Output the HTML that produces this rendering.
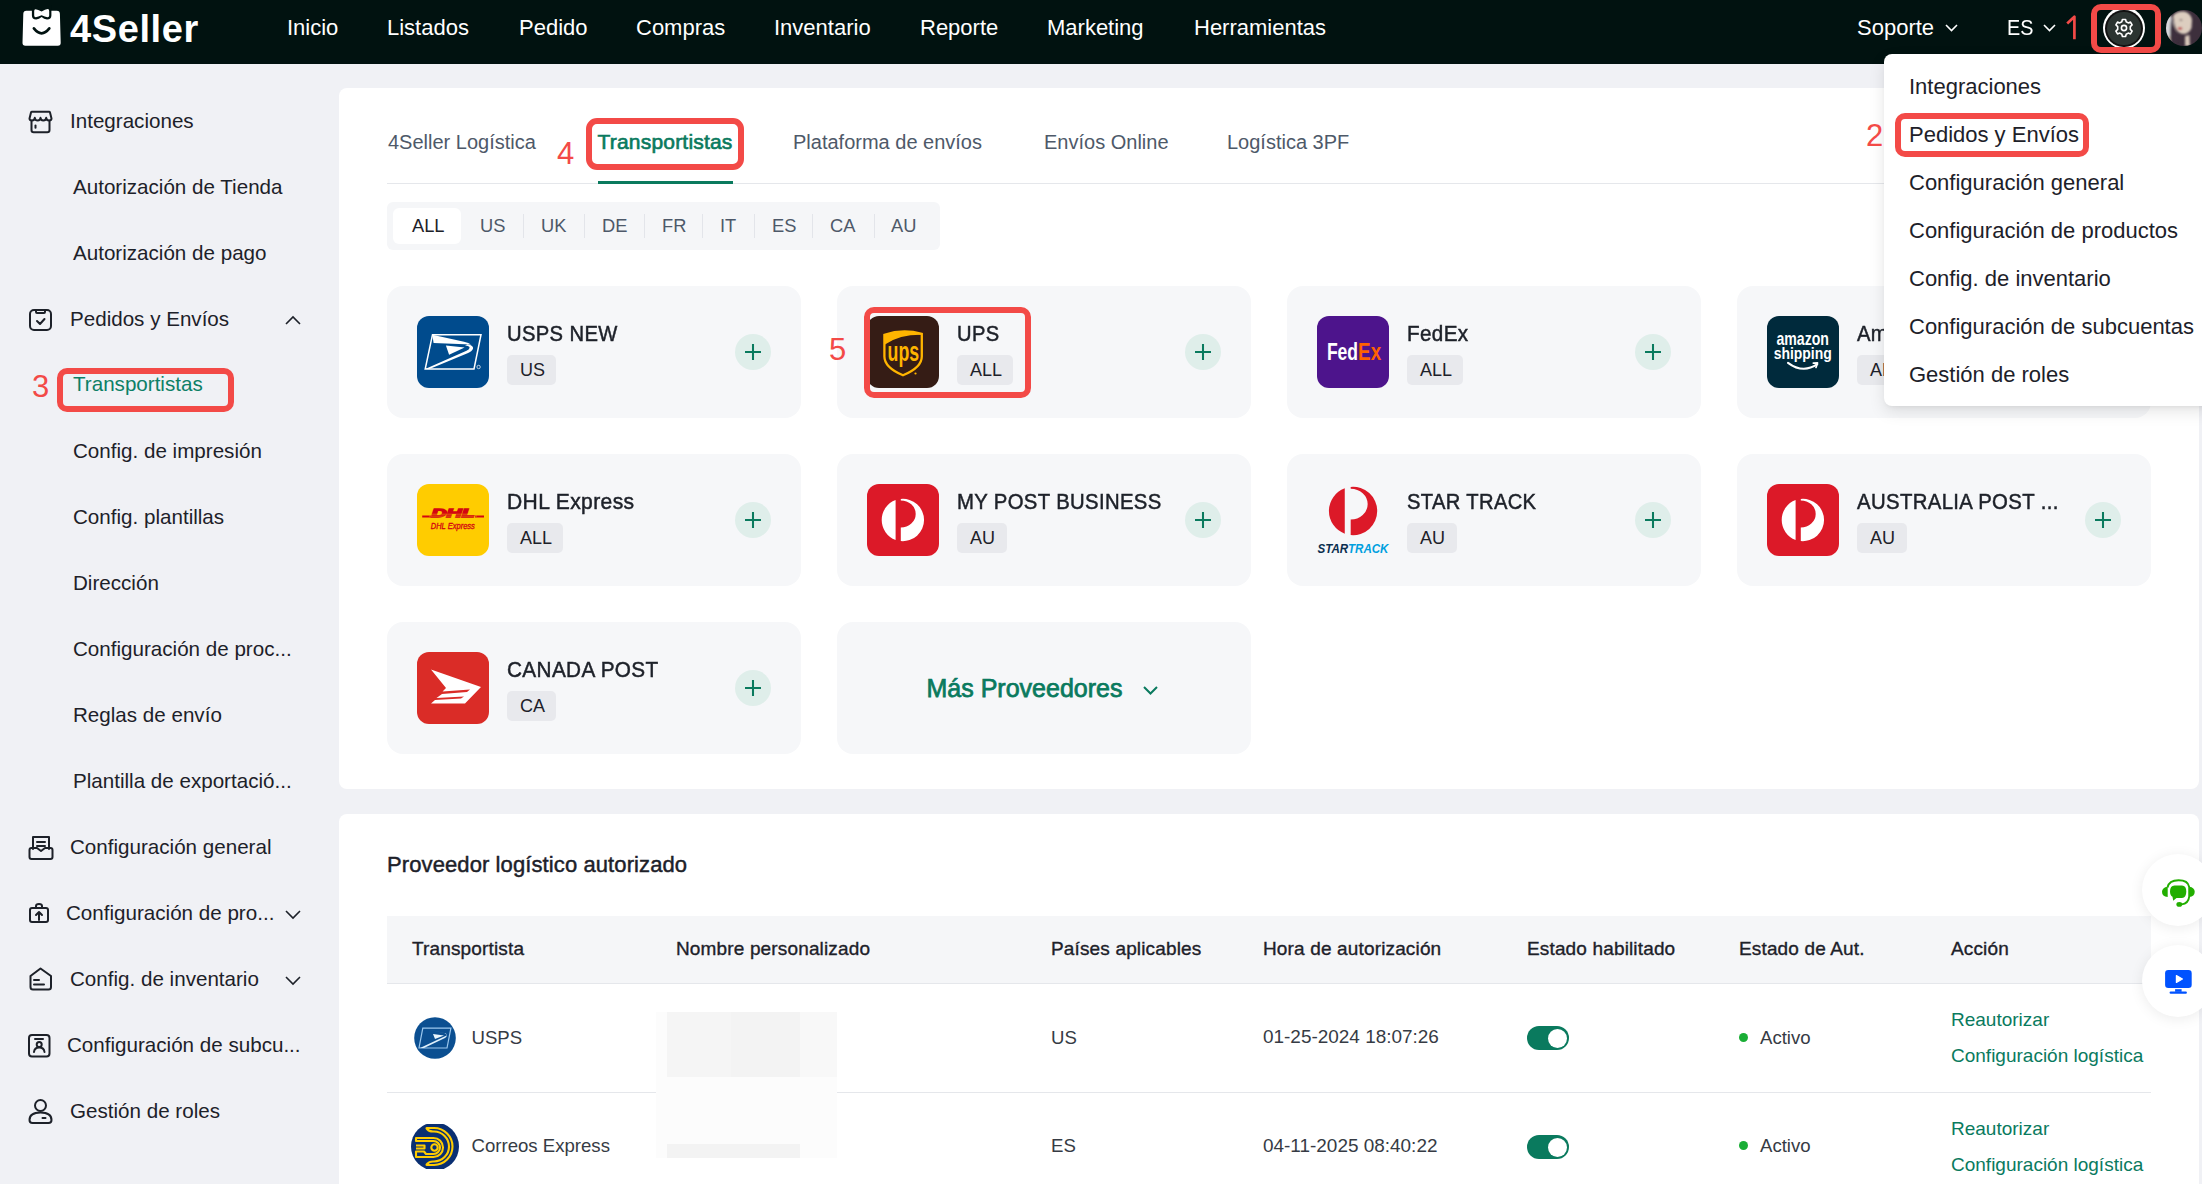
<!DOCTYPE html><html><head><meta charset="utf-8"><style>
html,body{margin:0;padding:0}
body{width:2202px;height:1184px;overflow:hidden;position:relative;background:#f0f1f5;font-family:"Liberation Sans",sans-serif}
.a{position:absolute;box-sizing:border-box}
.t{position:absolute;white-space:nowrap}
svg.a{overflow:visible}
</style></head><body>
<div class="a" style="left:0px;top:0px;width:2202px;height:64px;background:#011210"></div>
<svg class="a" style="left:18px;top:5px;" width="50" height="45" viewBox="0 0 50 45"><path d="M8.3 5.7 L38.8 5.7 Q41.8 5.7 41.9 8.7 L42.7 37.8 Q42.8 40.8 39.8 40.8 L7.4 40.8 Q4.4 40.8 4.5 37.8 L5.3 8.7 Q5.4 5.7 8.3 5.7 Z" fill="#fff"/>
<path d="M13.9 0 L33.4 0 L33.4 10.5 Q33.4 14.4 29 14.4 Q26 14.4 23.6 12 Q21 14.4 18.2 14.4 Q13.9 14.4 13.9 10.5 Z" fill="#011210"/>
<path d="M17.5 4.2 Q20 4.4 23.6 6.6 Q27.3 4.4 29.8 4.1 Q31.2 4.2 31.2 6 L31.2 10.5 Q31.2 12.3 29.5 12.2 Q27 11.8 23.6 10.3 Q20 11.8 17.8 12.2 Q16.2 12.3 16.2 10.5 L16.2 6 Q16.2 4.2 17.5 4.2 Z" fill="#fff"/>
<path d="M15.9 23.4 Q23.6 33.2 31.3 23.4" stroke="#011210" stroke-width="2.7" fill="none" stroke-linecap="round"/></svg>
<div class="t" style="left:70px;top:9.7px;font-size:38px;line-height:38px;color:#fff;font-weight:bold;letter-spacing:0.6px;">4Seller</div>
<div class="t" style="left:287px;top:17.3px;font-size:22px;line-height:22px;color:#fff;">Inicio</div>
<div class="t" style="left:387px;top:17.3px;font-size:22px;line-height:22px;color:#fff;">Listados</div>
<div class="t" style="left:519px;top:17.3px;font-size:22px;line-height:22px;color:#fff;">Pedido</div>
<div class="t" style="left:636px;top:17.3px;font-size:22px;line-height:22px;color:#fff;">Compras</div>
<div class="t" style="left:774px;top:17.3px;font-size:22px;line-height:22px;color:#fff;">Inventario</div>
<div class="t" style="left:920px;top:17.3px;font-size:22px;line-height:22px;color:#fff;">Reporte</div>
<div class="t" style="left:1047px;top:17.3px;font-size:22px;line-height:22px;color:#fff;">Marketing</div>
<div class="t" style="left:1194px;top:17.3px;font-size:22px;line-height:22px;color:#fff;">Herramientas</div>
<div class="t" style="left:1857px;top:17.3px;font-size:22px;line-height:22px;color:#fff;">Soporte</div>
<svg class="a" style="left:1945px;top:24px;" width="13" height="8" viewBox="0 0 13 8"><path d="M1 1 L6.5 6.5 L12 1" stroke="#fff" stroke-width="1.6" fill="none"/></svg>
<div class="t" style="left:2007.3px;top:17.3px;font-size:22px;line-height:22px;color:#fff;transform:scaleX(0.9);transform-origin:0 0;">ES</div>
<svg class="a" style="left:2043px;top:24px;" width="13" height="8" viewBox="0 0 13 8"><path d="M1 1 L6.5 6.5 L12 1" stroke="#fff" stroke-width="1.6" fill="none"/></svg>
<svg class="a" style="left:2066px;top:15px;" width="14" height="25" viewBox="0 0 14 25"><path d="M1.2 8.5 L7.8 2.2 L8.4 1.6 L8.4 24.3" stroke="#f34a47" stroke-width="2.7" fill="none" stroke-linejoin="round"/></svg>
<div class="a" style="left:2103px;top:7.3px;width:42px;height:42px;border-radius:50%;background:#fff"></div>
<div class="a" style="left:2105.2px;top:9.5px;width:37.6px;height:37.6px;border-radius:50%;background:#111"></div>
<div class="a" style="left:2107.3px;top:11.6px;width:33.6px;height:33.6px;border-radius:50%;background:#2b3431"></div>
<svg class="a" style="left:2114px;top:18px;" width="20" height="20" viewBox="0 0 20 20"><g transform="translate(10,10)" fill="none" stroke="#fff" stroke-width="1.6" stroke-linejoin="round">
<path d="M-1.6 -8.5 L1.6 -8.5 L2.2 -6.2 L4.2 -5.1 L6.5 -5.9 L8.1 -3.1 L6.3 -1.4 L6.3 1.4 L8.1 3.1 L6.5 5.9 L4.2 5.1 L2.2 6.2 L1.6 8.5 L-1.6 8.5 L-2.2 6.2 L-4.2 5.1 L-6.5 5.9 L-8.1 3.1 L-6.3 1.4 L-6.3 -1.4 L-8.1 -3.1 L-6.5 -5.9 L-4.2 -5.1 L-2.2 -6.2 Z"/>
<circle r="2.6"/></g></svg>
<div class="a" style="left:2091px;top:4px;width:70px;height:48.5px;border:6px solid #f34a47;border-radius:10px"></div>
<svg class="a" style="left:2166px;top:10px;" width="36" height="36" viewBox="0 0 36 36"><defs><clipPath id="av"><circle cx="18" cy="18" r="18"/></clipPath><filter id="avb" x="-20%" y="-20%" width="140%" height="140%"><feGaussianBlur stdDeviation="0.9"/></filter></defs>
<g clip-path="url(#av)"><rect width="36" height="36" fill="#3d2f3c"/><g filter="url(#avb)">
<ellipse cx="3" cy="17" rx="5" ry="12" fill="#d8d8dc"/>
<ellipse cx="4" cy="31" rx="5" ry="5" fill="#cfbdb0"/>
<path d="M7 6 Q10 1 18 1.5 Q25 3 26 10 L25.5 18 Q23 24 17 24 Q11 23 9 17 Z" fill="#dccdbf"/>
<path d="M6 5 Q7 18 12 30 L8 36 L5 36 Q3 20 6 5 Z" fill="#3d2f3c"/>
<ellipse cx="14" cy="18.5" rx="2.4" ry="1.3" fill="#b9353a"/>
<ellipse cx="15" cy="10" rx="1.5" ry="0.8" fill="#6a5a5a"/>
<path d="M19 26 L23.5 25 L24 36 L19 36 Z" fill="#d9c9bb"/></g></g></svg>
<svg class="a" style="left:28px;top:110px;" width="25" height="24" viewBox="0 0 25 24"><g fill="none" stroke="#1d2129" stroke-width="2" stroke-linecap="round" stroke-linejoin="round"><path d="M1.5 8.5 Q1.5 10.5 4 10.5 Q6.5 10.5 6.8 7.8 Q7.2 10.5 9.7 10.5 Q12.3 10.5 12.5 7.8 Q12.8 10.5 15.3 10.5 Q17.9 10.5 18.2 7.8 Q18.5 10.5 21 10.5 Q23.5 10.5 23.5 8.5 L22 2.5 Q21.8 1.8 21 1.8 L4 1.8 Q3.2 1.8 3 2.5 Z"/><path d="M3.5 10.8 L3.5 20 Q3.5 22.2 5.7 22.2 L19.3 22.2 Q21.5 22.2 21.5 20 L21.5 10.8"/><path d="M7.5 15.5 L7.5 17.8"/></g></svg>
<div class="t" style="left:70px;top:111.0px;font-size:20.6px;line-height:20.6px;color:#1d2129;">Integraciones</div>
<div class="t" style="left:73px;top:176.5px;font-size:20.6px;line-height:20.6px;color:#1d2129;">Autorización de Tienda</div>
<div class="t" style="left:73px;top:242.5px;font-size:20.6px;line-height:20.6px;color:#1d2129;">Autorización de pago</div>
<svg class="a" style="left:29px;top:308px;" width="24" height="23" viewBox="0 0 24 23"><g fill="none" stroke="#1d2129" stroke-width="2" stroke-linecap="round" stroke-linejoin="round"><rect x="1" y="2" width="21" height="20" rx="4"/><path d="M7 2 L7 4 Q7 5 8 5 L15 5 Q16 5 16 4 L16 2"/><path d="M8 13 L11 16 L15.5 11"/></g></svg>
<div class="t" style="left:70px;top:308.5px;font-size:20.6px;line-height:20.6px;color:#1d2129;">Pedidos y Envíos</div>
<svg class="a" style="left:285px;top:315px;" width="16" height="10" viewBox="0 0 16 10"><path d="M1 9 L8 2 L15 9" stroke="#1d2129" stroke-width="1.6" fill="none"/></svg>
<div class="t" style="left:73px;top:373.8px;font-size:20.6px;line-height:20.6px;color:#0d7f66;">Transportistas</div>
<div class="t" style="left:73px;top:440.5px;font-size:20.6px;line-height:20.6px;color:#1d2129;">Config. de impresión</div>
<div class="t" style="left:73px;top:506.5px;font-size:20.6px;line-height:20.6px;color:#1d2129;">Config. plantillas</div>
<div class="t" style="left:73px;top:572.5px;font-size:20.6px;line-height:20.6px;color:#1d2129;">Dirección</div>
<div class="t" style="left:73px;top:638.5px;font-size:20.6px;line-height:20.6px;color:#1d2129;">Configuración de proc...</div>
<div class="t" style="left:73px;top:704.5px;font-size:20.6px;line-height:20.6px;color:#1d2129;">Reglas de envío</div>
<div class="t" style="left:73px;top:770.5px;font-size:20.6px;line-height:20.6px;color:#1d2129;">Plantilla de exportació...</div>
<svg class="a" style="left:28px;top:835px;" width="26" height="25" viewBox="0 0 26 25"><g fill="none" stroke="#1d2129" stroke-width="2" stroke-linecap="round" stroke-linejoin="round"><path d="M5 14 L5 2 L21 2 L21 14"/><path d="M9 7 L17 7 M9 11 L17 11"/><path d="M1.5 15 Q1.5 13 3.5 13 L9 13 L13 16 L17 13 L22.5 13 Q24.5 13 24.5 15 L24.5 22 Q24.5 24 22.5 24 L3.5 24 Q1.5 24 1.5 22 Z"/></g></svg>
<div class="t" style="left:70px;top:836.5px;font-size:20.6px;line-height:20.6px;color:#1d2129;">Configuración general</div>
<svg class="a" style="left:29px;top:903px;" width="20" height="20" viewBox="0 0 20 20"><g fill="none" stroke="#1d2129" stroke-width="2" stroke-linecap="round" stroke-linejoin="round"><rect x="1" y="5" width="18" height="14" rx="2"/><path d="M7 5 L7 3 Q7 1 10 1 Q13 1 13 3 L13 5"/><path d="M10 17 L10 9 M7 12 L10 9 L13 12"/></g></svg>
<div class="t" style="left:66px;top:902.5px;font-size:20.6px;line-height:20.6px;color:#1d2129;">Configuración de pro...</div>
<svg class="a" style="left:285px;top:910px;" width="16" height="9" viewBox="0 0 16 9"><path d="M1 1 L8 8 L15 1" stroke="#1d2129" stroke-width="1.6" fill="none"/></svg>
<svg class="a" style="left:29px;top:967px;" width="24" height="24" viewBox="0 0 24 24"><g fill="none" stroke="#1d2129" stroke-width="2" stroke-linecap="round" stroke-linejoin="round"><path d="M1.5 9 L11.5 1.5 L22 9 L22 20 Q22 22.5 19.5 22.5 L4 22.5 Q1.5 22.5 1.5 20 Z"/><path d="M5 13 L10 13 M5 17.5 L15 17.5"/></g></svg>
<div class="t" style="left:70px;top:968.5px;font-size:20.6px;line-height:20.6px;color:#1d2129;">Config. de inventario</div>
<svg class="a" style="left:285px;top:976px;" width="16" height="9" viewBox="0 0 16 9"><path d="M1 1 L8 8 L15 1" stroke="#1d2129" stroke-width="1.6" fill="none"/></svg>
<svg class="a" style="left:28px;top:1034px;" width="22" height="23" viewBox="0 0 22 23"><g fill="none" stroke="#1d2129" stroke-width="2" stroke-linecap="round" stroke-linejoin="round"><rect x="1" y="1" width="20.5" height="21.5" rx="3"/><path d="M7 5 L15 5"/><circle cx="11.2" cy="10.5" r="2.5"/><path d="M6 18 Q6.5 13.5 11.2 13.5 Q16 13.5 16.5 18"/></g></svg>
<div class="t" style="left:67px;top:1034.5px;font-size:20.6px;line-height:20.6px;color:#1d2129;">Configuración de subcu...</div>
<svg class="a" style="left:28px;top:1099px;" width="26" height="26" viewBox="0 0 26 26"><g fill="none" stroke="#1d2129" stroke-width="2" stroke-linecap="round" stroke-linejoin="round"><circle cx="12.5" cy="6.5" r="5.5"/><path d="M1.5 21 Q1.5 13.5 12.5 13.5 Q23.5 13.5 23.5 21 Q23.5 24 20.5 24 L4.5 24 Q1.5 24 1.5 21 Z"/><path d="M14.5 19 L17.5 19"/></g></svg>
<div class="t" style="left:70px;top:1100.5px;font-size:20.6px;line-height:20.6px;color:#1d2129;">Gestión de roles</div>
<div class="t" style="left:32px;top:371.2px;font-size:31px;line-height:31px;color:#f34a47;">3</div>
<div class="a" style="left:57px;top:368px;width:177px;height:44px;border:6px solid #f34a47;border-radius:10px"></div>
<div class="a" style="left:339px;top:88px;width:1860px;height:701px;background:#fff;border-radius:8px"></div>
<div class="t" style="left:388px;top:132.0px;font-size:20px;line-height:20px;color:#4e5969;">4Seller Logística</div>
<div class="t" style="left:597.5px;top:131.3px;font-size:21px;line-height:21px;color:#0a7a5e;letter-spacing:0.2px;-webkit-text-stroke:0.65px #0a7a5e;">Transportistas</div>
<div class="t" style="left:793px;top:132.0px;font-size:20px;line-height:20px;color:#4e5969;">Plataforma de envíos</div>
<div class="t" style="left:1044px;top:132.0px;font-size:20px;line-height:20px;color:#4e5969;">Envíos Online</div>
<div class="t" style="left:1227px;top:132.0px;font-size:20px;line-height:20px;color:#4e5969;">Logística 3PF</div>
<div class="a" style="left:387px;top:183px;width:1764px;height:1px;background:#e5e7eb"></div>
<div class="a" style="left:598px;top:181px;width:135px;height:3px;background:#0a7a5e"></div>
<div class="t" style="left:557px;top:137.7px;font-size:31px;line-height:31px;color:#f34a47;">4</div>
<div class="a" style="left:586px;top:118px;width:158px;height:52px;border:6px solid #f34a47;border-radius:11px"></div>
<div class="a" style="left:387px;top:202px;width:553px;height:48px;background:#f5f6f8;border-radius:6px"></div>
<div class="a" style="left:393px;top:208px;width:68px;height:36px;background:#fff;border-radius:6px"></div>
<div class="t" style="left:412px;top:216.9px;font-size:18.3px;line-height:18.3px;color:#1d2129;">ALL</div>
<div class="t" style="left:480px;top:216.9px;font-size:18.3px;line-height:18.3px;color:#4e5969;">US</div>
<div class="t" style="left:541px;top:216.9px;font-size:18.3px;line-height:18.3px;color:#4e5969;">UK</div>
<div class="t" style="left:602px;top:216.9px;font-size:18.3px;line-height:18.3px;color:#4e5969;">DE</div>
<div class="t" style="left:662px;top:216.9px;font-size:18.3px;line-height:18.3px;color:#4e5969;">FR</div>
<div class="t" style="left:720px;top:216.9px;font-size:18.3px;line-height:18.3px;color:#4e5969;">IT</div>
<div class="t" style="left:772px;top:216.9px;font-size:18.3px;line-height:18.3px;color:#4e5969;">ES</div>
<div class="t" style="left:830px;top:216.9px;font-size:18.3px;line-height:18.3px;color:#4e5969;">CA</div>
<div class="t" style="left:891px;top:216.9px;font-size:18.3px;line-height:18.3px;color:#4e5969;">AU</div>
<div class="a" style="left:523px;top:214px;width:1px;height:24px;background:#e3e5ea"></div>
<div class="a" style="left:584px;top:214px;width:1px;height:24px;background:#e3e5ea"></div>
<div class="a" style="left:644px;top:214px;width:1px;height:24px;background:#e3e5ea"></div>
<div class="a" style="left:702px;top:214px;width:1px;height:24px;background:#e3e5ea"></div>
<div class="a" style="left:754px;top:214px;width:1px;height:24px;background:#e3e5ea"></div>
<div class="a" style="left:812px;top:214px;width:1px;height:24px;background:#e3e5ea"></div>
<div class="a" style="left:874px;top:214px;width:1px;height:24px;background:#e3e5ea"></div>
<div class="a" style="left:387px;top:286px;width:414px;height:132px;background:#f6f7f9;border-radius:16px"></div>
<svg class="a" style="left:417px;top:316px;" width="72" height="72" viewBox="0 0 72 72"><rect width="72" height="72" rx="12" fill="#004b8d"/>
<path d="M15.5 18.7 L64 18.7 L57 53 L8.2 53 Z" fill="none" stroke="#fff" stroke-width="1.5"/>
<path d="M15.3 18.7 L47 25.8 Q52 27 54 28.6 L16.6 27 Z" fill="#fff"/>
<path d="M50.5 28.2 Q56.8 29.6 56 32.8 Q55 35.6 50.5 37.2 L12.5 53 L8.2 53 L49.5 34.8 Q52.8 33.3 52.6 31.6 Q52.3 30 48 29.6 Z" fill="#fff"/>
<path d="M28.9 29.6 L47.6 31.4 L32.1 38.8 Z" fill="#fff"/>
<circle cx="61.6" cy="51" r="1.7" fill="none" stroke="#fff" stroke-width="0.7"/></svg>
<div class="t" style="left:507px;top:322.6px;font-size:22.5px;line-height:22.5px;color:#1d2129;letter-spacing:0.4px;-webkit-text-stroke:0.5px #1d2129;transform:scaleX(0.898);transform-origin:0 0;">USPS NEW</div>
<div class="a" style="left:507px;top:355px;width:49px;height:30px;background:#e8e9ed;border-radius:5px"></div>
<div class="t" style="left:520px;top:360.7px;font-size:18px;line-height:18px;color:#1d2129;">US</div>
<div class="a" style="left:735px;top:334px;width:36px;height:36px;background:#dfeeea;border-radius:50%"></div>
<svg class="a" style="left:745px;top:344px;" width="16" height="16" viewBox="0 0 16 16"><path d="M8 0 L8 16 M0 8 L16 8" stroke="#0a7a5e" stroke-width="2.05"/></svg>
<div class="a" style="left:837px;top:286px;width:414px;height:132px;background:#f6f7f9;border-radius:16px"></div>
<svg class="a" style="left:867px;top:316px;" width="72" height="72" viewBox="0 0 72 72"><rect width="72" height="72" rx="12" fill="#351c15"/>
<path d="M17.4 18.8 Q36 12.6 54.8 17.9 L54.8 40.5 Q54.8 51.5 36 59.3 Q17.4 51.5 17.4 40.5 Z" fill="none" stroke="#ffb500" stroke-width="2.3"/>
<path d="M17.4 18.8 Q36 12.6 54.8 17.9 L54.8 18.8 Q33 18.5 18.4 28.2 L17.4 28.8 Z" fill="#ffb500"/>
<text x="20.6" y="44.6" font-family="Liberation Sans" font-weight="bold" font-size="28" fill="#ffb500" textLength="31.6" lengthAdjust="spacingAndGlyphs">ups</text>
<circle cx="48.5" cy="57.5" r="1.1" fill="#ffb500"/></svg>
<div class="t" style="left:957px;top:322.6px;font-size:22.5px;line-height:22.5px;color:#1d2129;letter-spacing:0.4px;-webkit-text-stroke:0.5px #1d2129;transform:scaleX(0.895);transform-origin:0 0;">UPS</div>
<div class="a" style="left:957px;top:355px;width:56px;height:30px;background:#e8e9ed;border-radius:5px"></div>
<div class="t" style="left:970px;top:360.7px;font-size:18px;line-height:18px;color:#1d2129;">ALL</div>
<div class="a" style="left:1185px;top:334px;width:36px;height:36px;background:#dfeeea;border-radius:50%"></div>
<svg class="a" style="left:1195px;top:344px;" width="16" height="16" viewBox="0 0 16 16"><path d="M8 0 L8 16 M0 8 L16 8" stroke="#0a7a5e" stroke-width="2.05"/></svg>
<div class="a" style="left:1287px;top:286px;width:414px;height:132px;background:#f6f7f9;border-radius:16px"></div>
<svg class="a" style="left:1317px;top:316px;" width="72" height="72" viewBox="0 0 72 72"><rect width="72" height="72" rx="12" fill="#4d148c"/>
<text x="9.9" y="43.9" font-family="Liberation Sans" font-weight="bold" font-size="24" fill="#fff" textLength="31.2" lengthAdjust="spacingAndGlyphs">Fed</text>
<text x="41.1" y="43.9" font-family="Liberation Sans" font-weight="bold" font-size="24" fill="#ff6200" textLength="23" lengthAdjust="spacingAndGlyphs">Ex</text></svg>
<div class="t" style="left:1407px;top:322.6px;font-size:22.5px;line-height:22.5px;color:#1d2129;letter-spacing:0.4px;-webkit-text-stroke:0.5px #1d2129;transform:scaleX(0.918);transform-origin:0 0;">FedEx</div>
<div class="a" style="left:1407px;top:355px;width:56px;height:30px;background:#e8e9ed;border-radius:5px"></div>
<div class="t" style="left:1420px;top:360.7px;font-size:18px;line-height:18px;color:#1d2129;">ALL</div>
<div class="a" style="left:1635px;top:334px;width:36px;height:36px;background:#dfeeea;border-radius:50%"></div>
<svg class="a" style="left:1645px;top:344px;" width="16" height="16" viewBox="0 0 16 16"><path d="M8 0 L8 16 M0 8 L16 8" stroke="#0a7a5e" stroke-width="2.05"/></svg>
<div class="a" style="left:1737px;top:286px;width:414px;height:132px;background:#f6f7f9;border-radius:16px"></div>
<svg class="a" style="left:1767px;top:316px;" width="72" height="72" viewBox="0 0 72 72"><rect width="72" height="72" rx="12" fill="#002a3c"/>
<text x="9.4" y="28.6" font-family="Liberation Sans" font-weight="bold" font-size="17.7" fill="#fff" textLength="52.6" lengthAdjust="spacingAndGlyphs">amazon</text>
<text x="6.7" y="42.6" font-family="Liberation Sans" font-weight="bold" font-size="16.7" fill="#fff" textLength="58.1" lengthAdjust="spacingAndGlyphs">shipping</text>
<path d="M21 46.8 Q36 58 50.3 48.2" stroke="#fff" stroke-width="2.1" fill="none" stroke-linecap="round"/>
<path d="M46.3 47.1 L50.5 46.8 L49 51.5" stroke="#fff" stroke-width="1.7" fill="none" stroke-linecap="round" stroke-linejoin="round"/></svg>
<div class="t" style="left:1857px;top:322.6px;font-size:22.5px;line-height:22.5px;color:#1d2129;letter-spacing:0.4px;-webkit-text-stroke:0.5px #1d2129;transform:scaleX(0.9);transform-origin:0 0;">Amazon Shipping</div>
<div class="a" style="left:1857px;top:355px;width:56px;height:30px;background:#e8e9ed;border-radius:5px"></div>
<div class="t" style="left:1870px;top:360.7px;font-size:18px;line-height:18px;color:#1d2129;">ALL</div>
<div class="a" style="left:2085px;top:334px;width:36px;height:36px;background:#dfeeea;border-radius:50%"></div>
<svg class="a" style="left:2095px;top:344px;" width="16" height="16" viewBox="0 0 16 16"><path d="M8 0 L8 16 M0 8 L16 8" stroke="#0a7a5e" stroke-width="2.05"/></svg>
<div class="a" style="left:387px;top:454px;width:414px;height:132px;background:#f6f7f9;border-radius:16px"></div>
<svg class="a" style="left:417px;top:484px;" width="72" height="72" viewBox="0 0 72 72"><rect width="72" height="72" rx="12" fill="#ffcc00"/>
<path d="M5.2 32.5 L14 32.5 M58 32.5 L67 32.5" stroke="#d40511" stroke-width="2.2"/>
<text x="14.5" y="33.4" font-family="Liberation Sans" font-weight="bold" font-style="italic" font-size="11.5" fill="#d40511" stroke="#d40511" stroke-width="1.3" textLength="43" lengthAdjust="spacingAndGlyphs">DHL</text>
<path d="M12 30.2 L60 30.2 M12 32.1 L60 32.1" stroke="#ffcc00" stroke-width="0.45"/>
<text x="13.8" y="45" font-family="Liberation Sans" font-style="italic" font-size="9.5" fill="#d40511" stroke="#d40511" stroke-width="0.35" textLength="44" lengthAdjust="spacingAndGlyphs">DHL Express</text></svg>
<div class="t" style="left:507px;top:490.6px;font-size:22.5px;line-height:22.5px;color:#1d2129;letter-spacing:0.4px;-webkit-text-stroke:0.5px #1d2129;transform:scaleX(0.937);transform-origin:0 0;">DHL Express</div>
<div class="a" style="left:507px;top:523px;width:56px;height:30px;background:#e8e9ed;border-radius:5px"></div>
<div class="t" style="left:520px;top:528.7px;font-size:18px;line-height:18px;color:#1d2129;">ALL</div>
<div class="a" style="left:735px;top:502px;width:36px;height:36px;background:#dfeeea;border-radius:50%"></div>
<svg class="a" style="left:745px;top:512px;" width="16" height="16" viewBox="0 0 16 16"><path d="M8 0 L8 16 M0 8 L16 8" stroke="#0a7a5e" stroke-width="2.05"/></svg>
<div class="a" style="left:837px;top:454px;width:414px;height:132px;background:#f6f7f9;border-radius:16px"></div>
<svg class="a" style="left:867px;top:484px;" width="72" height="72" viewBox="0 0 72 72"><rect width="72" height="72" rx="12" fill="#dc1928"/><path d="M28.6 16.1 A21.2 21.2 0 0 0 28.6 55.9 Z" fill="#fff"/>
<path d="M33.8 14.9 A21.2 21.2 0 1 1 33.8 57.1 L33.8 43.5 A14.9 13.55 0 0 0 33.8 16.4 Z" fill="#fff"/></svg>
<div class="t" style="left:957px;top:490.6px;font-size:22.5px;line-height:22.5px;color:#1d2129;letter-spacing:0.4px;-webkit-text-stroke:0.5px #1d2129;transform:scaleX(0.902);transform-origin:0 0;">MY POST BUSINESS</div>
<div class="a" style="left:957px;top:523px;width:50px;height:30px;background:#e8e9ed;border-radius:5px"></div>
<div class="t" style="left:970px;top:528.7px;font-size:18px;line-height:18px;color:#1d2129;">AU</div>
<div class="a" style="left:1185px;top:502px;width:36px;height:36px;background:#dfeeea;border-radius:50%"></div>
<svg class="a" style="left:1195px;top:512px;" width="16" height="16" viewBox="0 0 16 16"><path d="M8 0 L8 16 M0 8 L16 8" stroke="#0a7a5e" stroke-width="2.05"/></svg>
<div class="a" style="left:1287px;top:454px;width:414px;height:132px;background:#f6f7f9;border-radius:16px"></div>
<svg class="a" style="left:1317px;top:484px;" width="72" height="72" viewBox="0 0 72 72"><g transform="translate(36.2,27) scale(1.14) translate(-36,-36)"><path d="M28.6 16.1 A21.2 21.2 0 0 0 28.6 55.9 Z" fill="#dc1928"/>
<path d="M33.8 14.9 A21.2 21.2 0 1 1 33.8 57.1 L33.8 43.5 A14.9 13.55 0 0 0 33.8 16.4 Z" fill="#dc1928"/></g>
<text x="0.5" y="69" font-family="Liberation Sans" font-weight="bold" font-style="italic" font-size="12" textLength="71" lengthAdjust="spacingAndGlyphs"><tspan fill="#0b2e4f">STAR</tspan><tspan fill="#00a0df">TRACK</tspan></text></svg>
<div class="t" style="left:1407px;top:490.6px;font-size:22.5px;line-height:22.5px;color:#1d2129;letter-spacing:0.4px;-webkit-text-stroke:0.5px #1d2129;transform:scaleX(0.896);transform-origin:0 0;">STAR TRACK</div>
<div class="a" style="left:1407px;top:523px;width:50px;height:30px;background:#e8e9ed;border-radius:5px"></div>
<div class="t" style="left:1420px;top:528.7px;font-size:18px;line-height:18px;color:#1d2129;">AU</div>
<div class="a" style="left:1635px;top:502px;width:36px;height:36px;background:#dfeeea;border-radius:50%"></div>
<svg class="a" style="left:1645px;top:512px;" width="16" height="16" viewBox="0 0 16 16"><path d="M8 0 L8 16 M0 8 L16 8" stroke="#0a7a5e" stroke-width="2.05"/></svg>
<div class="a" style="left:1737px;top:454px;width:414px;height:132px;background:#f6f7f9;border-radius:16px"></div>
<svg class="a" style="left:1767px;top:484px;" width="72" height="72" viewBox="0 0 72 72"><rect width="72" height="72" rx="12" fill="#dc1928"/><path d="M28.6 16.1 A21.2 21.2 0 0 0 28.6 55.9 Z" fill="#fff"/>
<path d="M33.8 14.9 A21.2 21.2 0 1 1 33.8 57.1 L33.8 43.5 A14.9 13.55 0 0 0 33.8 16.4 Z" fill="#fff"/></svg>
<div class="t" style="left:1857px;top:490.6px;font-size:22.5px;line-height:22.5px;color:#1d2129;letter-spacing:0.4px;-webkit-text-stroke:0.5px #1d2129;transform:scaleX(0.904);transform-origin:0 0;">AUSTRALIA POST ...</div>
<div class="a" style="left:1857px;top:523px;width:50px;height:30px;background:#e8e9ed;border-radius:5px"></div>
<div class="t" style="left:1870px;top:528.7px;font-size:18px;line-height:18px;color:#1d2129;">AU</div>
<div class="a" style="left:2085px;top:502px;width:36px;height:36px;background:#dfeeea;border-radius:50%"></div>
<svg class="a" style="left:2095px;top:512px;" width="16" height="16" viewBox="0 0 16 16"><path d="M8 0 L8 16 M0 8 L16 8" stroke="#0a7a5e" stroke-width="2.05"/></svg>
<div class="a" style="left:387px;top:622px;width:414px;height:132px;background:#f6f7f9;border-radius:16px"></div>
<svg class="a" style="left:417px;top:652px;" width="72" height="72" viewBox="0 0 72 72"><rect width="72" height="72" rx="12" fill="#da2c27"/>
<path d="M14 17.5 L64 35 L48 51.5 L14 51.5 L18 48 L44 46.5 L47 44.5 L19.5 46 L25 42 L50 40 L53 37.5 L25.5 39.5 L29 36 Z" fill="#fff"/></svg>
<div class="t" style="left:507px;top:658.6px;font-size:22.5px;line-height:22.5px;color:#1d2129;letter-spacing:0.4px;-webkit-text-stroke:0.5px #1d2129;transform:scaleX(0.922);transform-origin:0 0;">CANADA POST</div>
<div class="a" style="left:507px;top:691px;width:49px;height:30px;background:#e8e9ed;border-radius:5px"></div>
<div class="t" style="left:520px;top:696.7px;font-size:18px;line-height:18px;color:#1d2129;">CA</div>
<div class="a" style="left:735px;top:670px;width:36px;height:36px;background:#dfeeea;border-radius:50%"></div>
<svg class="a" style="left:745px;top:680px;" width="16" height="16" viewBox="0 0 16 16"><path d="M8 0 L8 16 M0 8 L16 8" stroke="#0a7a5e" stroke-width="2.05"/></svg>
<div class="a" style="left:837px;top:622px;width:414px;height:132px;background:#f6f7f9;border-radius:16px"></div>
<div class="t" style="left:926.5px;top:676.2px;font-size:25px;line-height:25px;color:#0a7a5e;-webkit-text-stroke:0.75px #0a7a5e;">Más Proveedores</div>
<svg class="a" style="left:1143px;top:686px;" width="15" height="9" viewBox="0 0 15 9"><path d="M1 1 L7.5 7.5 L14 1" stroke="#0a7a5e" stroke-width="2" fill="none"/></svg>
<div class="t" style="left:829px;top:333.6px;font-size:31px;line-height:31px;color:#f34a47;">5</div>
<div class="a" style="left:864px;top:307px;width:167px;height:91px;border:6px solid #f34a47;border-radius:10px"></div>
<div class="a" style="left:339px;top:814px;width:1860px;height:400px;background:#fff;border-radius:8px"></div>
<div class="t" style="left:387px;top:853.8px;font-size:22px;line-height:22px;color:#1d2129;letter-spacing:0.1px;-webkit-text-stroke:0.45px #1d2129;">Proveedor logístico autorizado</div>
<div class="a" style="left:387px;top:916px;width:1764px;height:67px;background:#f5f6f8"></div>
<div class="a" style="left:387px;top:983px;width:1764px;height:1px;background:#e5e7eb"></div>
<div class="t" style="left:412px;top:938.9px;font-size:19px;line-height:19px;color:#1d2129;letter-spacing:0.15px;-webkit-text-stroke:0.35px #1d2129;">Transportista</div>
<div class="t" style="left:676px;top:938.9px;font-size:19px;line-height:19px;color:#1d2129;letter-spacing:0.15px;-webkit-text-stroke:0.35px #1d2129;">Nombre personalizado</div>
<div class="t" style="left:1051px;top:938.9px;font-size:19px;line-height:19px;color:#1d2129;letter-spacing:0.15px;-webkit-text-stroke:0.35px #1d2129;">Países aplicables</div>
<div class="t" style="left:1263px;top:938.9px;font-size:19px;line-height:19px;color:#1d2129;letter-spacing:0.15px;-webkit-text-stroke:0.35px #1d2129;">Hora de autorización</div>
<div class="t" style="left:1527px;top:938.9px;font-size:19px;line-height:19px;color:#1d2129;letter-spacing:0.15px;-webkit-text-stroke:0.35px #1d2129;">Estado habilitado</div>
<div class="t" style="left:1739px;top:938.9px;font-size:19px;line-height:19px;color:#1d2129;letter-spacing:0.15px;-webkit-text-stroke:0.35px #1d2129;">Estado de Aut.</div>
<div class="t" style="left:1951px;top:938.9px;font-size:19px;line-height:19px;color:#1d2129;letter-spacing:0.15px;-webkit-text-stroke:0.35px #1d2129;">Acción</div>
<div class="a" style="left:387px;top:1092px;width:269px;height:1px;background:#e5e7eb"></div>
<div class="a" style="left:837px;top:1092px;width:1314px;height:1px;background:#e5e7eb"></div>
<svg class="a" style="left:414px;top:1017px;" width="42" height="42" viewBox="0 0 42 42"><circle cx="21" cy="21" r="20.8" fill="#0b4f91"/>
<path d="M8.8 11.2 L36.9 11.2 L33 31 L5 31 Z" fill="none" stroke="#9cc8ee" stroke-width="1.2"/>
<path d="M8.8 11.2 L30 16 Q33 17 32.6 18.5 L6 31 L10 31 L31 21 Q34 19 32 16.5 Z" fill="#dff0fb"/>
<path d="M19 17 L30 18.5 L21 22 Z" fill="#eaf6fd"/></svg>
<div class="t" style="left:471.5px;top:1028.7px;font-size:18.6px;line-height:18.6px;color:#363b44;">USPS</div>
<div class="t" style="left:1051px;top:1028.7px;font-size:18.6px;line-height:18.6px;color:#363b44;">US</div>
<div class="t" style="left:1263px;top:1028.4px;font-size:18.95px;line-height:18.95px;color:#363b44;">01-25-2024 18:07:26</div>
<div class="a" style="left:1527px;top:1026px;width:42px;height:24px;background:#0a7a5e;border-radius:12px"></div>
<div class="a" style="left:1548px;top:1028.5px;width:19px;height:19px;background:#fff;border-radius:50%"></div>
<div class="a" style="left:1739px;top:1033px;width:9px;height:9px;background:#1aae36;border-radius:50%"></div>
<div class="t" style="left:1760px;top:1028.7px;font-size:18.6px;line-height:18.6px;color:#363b44;">Activo</div>
<div class="t" style="left:1951px;top:1010.4px;font-size:19px;line-height:19px;color:#0a7a5e;">Reautorizar</div>
<div class="t" style="left:1951px;top:1046.3px;font-size:19px;line-height:19px;color:#0a7a5e;">Configuración logística</div>
<svg class="a" style="left:411px;top:1124px;" width="48" height="45" viewBox="0 0 48 45"><defs><clipPath id="cc"><rect x="0" y="0" width="48" height="45"/></clipPath></defs>
<g clip-path="url(#cc)"><circle cx="24" cy="22.5" r="24" fill="#0a2f72"/>
<g fill="none" stroke="#ffcc00" stroke-width="2.1" stroke-linejoin="round">
<path d="M16 4 L23 4 A18.5 18.5 0 0 1 23 41 L16 41 Q15 41 16 40 Q18 37.5 22 37.5 L23 37.5 A15 15 0 0 0 23 7.5 L22 7.5 Q18 7.5 16 5 Q15 4 16 4 Z"/>
<path d="M5 14 L22.5 14 A9.5 9.5 0 0 1 22.5 33 L5 33 L5 27.5 L13 27.5 L15 30 L22.5 30 A6.5 6.5 0 0 0 22.5 17 L5 17 Z"/>
<path d="M5 21.5 L13.5 21.5 L13.5 24.5 L5 24.5"/>
<circle cx="23.5" cy="23.5" r="3.2"/></g></g></svg>
<div class="t" style="left:471.5px;top:1137.2px;font-size:18.6px;line-height:18.6px;color:#363b44;">Correos Express</div>
<div class="t" style="left:1051px;top:1137.2px;font-size:18.6px;line-height:18.6px;color:#363b44;">ES</div>
<div class="t" style="left:1263px;top:1136.9px;font-size:18.95px;line-height:18.95px;color:#363b44;">04-11-2025 08:40:22</div>
<div class="a" style="left:1527px;top:1135px;width:42px;height:24px;background:#0a7a5e;border-radius:12px"></div>
<div class="a" style="left:1548px;top:1137.5px;width:19px;height:19px;background:#fff;border-radius:50%"></div>
<div class="a" style="left:1739px;top:1141px;width:9px;height:9px;background:#1aae36;border-radius:50%"></div>
<div class="t" style="left:1760px;top:1137.2px;font-size:18.6px;line-height:18.6px;color:#363b44;">Activo</div>
<div class="t" style="left:1951px;top:1118.8px;font-size:19px;line-height:19px;color:#0a7a5e;">Reautorizar</div>
<div class="t" style="left:1951px;top:1154.8px;font-size:19px;line-height:19px;color:#0a7a5e;">Configuración logística</div>
<div class="a" style="left:656px;top:1012px;width:181px;height:146px;background:#fcfcfc"></div>
<div class="a" style="left:667px;top:1012px;width:64px;height:65px;background:#f5f5f5"></div>
<div class="a" style="left:731px;top:1012px;width:69px;height:65px;background:#f3f3f3"></div>
<div class="a" style="left:800px;top:1012px;width:37px;height:65px;background:#f8f8f8"></div>
<div class="a" style="left:667px;top:1144px;width:133px;height:14px;background:#f3f3f3"></div>
<div class="a" style="left:1884px;top:54px;width:330px;height:352px;background:#fff;border-radius:8px;box-shadow:0 6px 16px rgba(0,0,0,0.10),0 3px 6px -4px rgba(0,0,0,0.12)"></div>
<div class="t" style="left:1909px;top:75.6px;font-size:22px;line-height:22px;color:#1d2129;">Integraciones</div>
<div class="t" style="left:1909px;top:123.6px;font-size:22px;line-height:22px;color:#1d2129;">Pedidos y Envíos</div>
<div class="t" style="left:1909px;top:171.6px;font-size:22px;line-height:22px;color:#1d2129;">Configuración general</div>
<div class="t" style="left:1909px;top:219.6px;font-size:22px;line-height:22px;color:#1d2129;">Configuración de productos</div>
<div class="t" style="left:1909px;top:267.6px;font-size:22px;line-height:22px;color:#1d2129;">Config. de inventario</div>
<div class="t" style="left:1909px;top:315.6px;font-size:22px;line-height:22px;color:#1d2129;">Configuración de subcuentas</div>
<div class="t" style="left:1909px;top:363.6px;font-size:22px;line-height:22px;color:#1d2129;">Gestión de roles</div>
<div class="t" style="left:1866px;top:119.7px;font-size:31px;line-height:31px;color:#f34a47;">2</div>
<div class="a" style="left:1895px;top:113px;width:194px;height:44px;border:6px solid #f34a47;border-radius:10px"></div>
<div class="a" style="left:2142px;top:854px;width:72px;height:72px;background:#fff;border-radius:50%;box-shadow:0 2px 14px rgba(0,0,0,0.08)"></div>
<svg class="a" style="left:2155px;top:870px;" width="47" height="45" viewBox="0 0 47 45"><g fill="#22ae00">
<path d="M12.5 17.5 Q14 10.3 23.6 10.3 Q33 10.3 34.2 17 L34.2 26.6 Q33.5 33.5 26.6 34.4" fill="none" stroke="#22ae00" stroke-width="1.9"/>
<path d="M12.7 16.7 Q7 17.5 7 21.8 Q7 26.5 12.7 27 Z"/>
<path d="M34.2 16.7 Q39.7 17.5 39.7 21.8 Q39.7 26.5 34.2 27 Z"/>
<path d="M19.5 15.4 L27 15.4 Q31.3 15.4 31.3 21.6 Q31.3 27.9 27 27.9 L21.5 27.9 L18.2 30.8 L17.5 26.8 Q15 25.5 15 21.6 Q15 15.4 19.5 15.4 Z"/>
<ellipse cx="24.3" cy="34.4" rx="2.9" ry="2.3"/></g></svg>
<div class="a" style="left:2142px;top:945px;width:72px;height:72px;background:#fff;border-radius:50%;box-shadow:0 2px 14px rgba(0,0,0,0.08)"></div>
<svg class="a" style="left:2155px;top:960px;" width="47" height="45" viewBox="0 0 47 45"><rect x="10.1" y="10.1" width="26.6" height="17.8" rx="3.2" fill="#0052ff"/>
<path d="M21.4 15.6 L27.4 19 L21.4 22.4 Z" fill="#fff" stroke="#fff" stroke-width="1.2" stroke-linejoin="round"/>
<rect x="20.1" y="29.2" width="6.5" height="2.6" fill="#0052ff"/>
<rect x="14.6" y="31.5" width="17.3" height="2.3" rx="1.1" fill="#0052ff"/></svg>
</body></html>
